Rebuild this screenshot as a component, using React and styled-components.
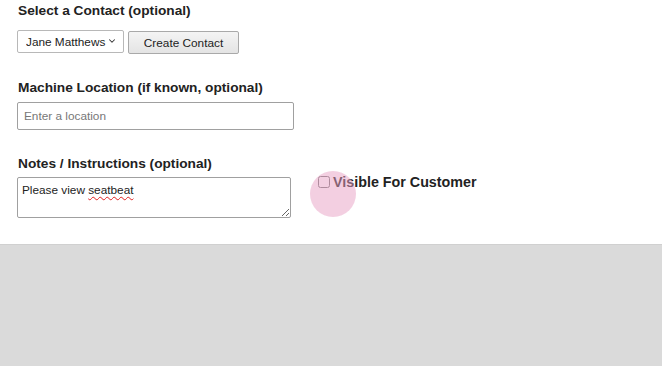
import React from "react"
import styled, { createGlobalStyle } from "styled-components"
import { ChevronDown } from "lucide-react"

const GlobalStyle = createGlobalStyle`
  html, body {
    margin: 0;
    padding: 0;
    background: #dadada;
    font-family: "Liberation Sans", Arial, sans-serif;
  }
`

const Panel = styled.div`
  background: #ffffff;
  height: 245px;
  border-bottom: 1px solid #d0d0d0;
  padding: 3px 0 0 17px;
  box-sizing: border-box;
`

const Field = styled.div`
  margin-top: ${(p) => p.top || "0"};
  margin-bottom: 26px;
`

const Label = styled.div`
  font-size: 13.7px;
  font-weight: bold;
  color: #222;
  line-height: 16px;
  margin: 0 0 ${(p) => p.spacing || "10px"} 1px;
`

const Row = styled.div`
  display: flex;
  align-items: ${(p) => p.align || "center"};
  gap: ${(p) => p.gap || "4px"};
`

const SelectWrap = styled.div`
  position: relative;
  width: 107px;
  height: 23px;
  svg {
    position: absolute;
    right: 7px;
    top: 6px;
    pointer-events: none;
    color: #333;
  }
`

const Select = styled.select`
  appearance: none;
  font-family: inherit;
  font-size: 11.8px;
  height: 23px;
  width: 100%;
  border: 1px solid #b8b8b8;
  border-radius: 2px;
  background: #fff;
  color: #222;
  padding: 0 0 0 8px;
  outline: none;
`

const Button = styled.button`
  font-family: inherit;
  font-size: 11.8px;
  height: 23px;
  width: 111px;
  margin-top: 2px;
  border: 1px solid #a9a9a9;
  border-radius: 2px;
  background: linear-gradient(#f4f4f4, #e4e4e4);
  color: #222;
`

const TextInput = styled.input`
  font-family: inherit;
  font-size: 11.8px;
  width: 277px;
  height: 28px;
  box-sizing: border-box;
  border: 1px solid #a0a0a0;
  border-radius: 2px;
  padding: 0 6px;
  color: #222;
  &::placeholder {
    color: #777;
  }
`

const NotesWrap = styled.div`
  position: relative;
  width: 274px;
  height: 41px;
`

const NotesArea = styled.textarea`
  display: block;
  font-family: inherit;
  font-size: 11.8px;
  line-height: 14px;
  width: 100%;
  height: 100%;
  box-sizing: border-box;
  border: 1px solid #a0a0a0;
  border-radius: 2px;
  padding: 5px 4px 4px;
  margin: 0;
  color: #222;
  resize: both;
`

const SpellMark = styled.div`
  position: absolute;
  left: 5px;
  top: 6px;
  font-size: 11.8px;
  line-height: 14px;
  color: transparent;
  pointer-events: none;
  white-space: pre;
  span {
    text-decoration: underline wavy #e02020;
    text-decoration-thickness: 1px;
    text-underline-offset: 2px;
  }
`

const CheckLabel = styled.label`
  position: relative;
  display: flex;
  align-items: center;
  gap: 3px;
  margin-top: -3px;
  font-size: 14.3px;
  font-weight: bold;
  color: #222;
`

const Box = styled.input`
  margin: 0;
  width: 12px;
  height: 12px;
`

const ClickRing = styled.span`
  position: absolute;
  left: -8px;
  top: -3px;
  width: 46px;
  height: 46px;
  border-radius: 50%;
  background: rgba(232, 160, 196, 0.5);
  pointer-events: none;
`

export default function App() {
  return (
    <>
      <GlobalStyle />
      <Panel>
        <Field>
          <Label>Select a Contact (optional)</Label>
          <Row>
            <SelectWrap>
              <Select defaultValue="jane">
                <option value="jane">Jane Matthews</option>
              </Select>
              <ChevronDown size={10} strokeWidth={2.5} />
            </SelectWrap>
            <Button>Create Contact</Button>
          </Row>
        </Field>
        <Field>
          <Label spacing="6px">Machine Location (if known, optional)</Label>
          <TextInput placeholder="Enter a location" />
        </Field>
        <Field top="1px">
          <Label spacing="5px">Notes / Instructions (optional)</Label>
          <Row align="flex-start" gap="27px">
            <NotesWrap>
              <NotesArea defaultValue="Please view seatbeat" spellCheck={false} />
              <SpellMark>
                Please view <span>seatbeat</span>
              </SpellMark>
            </NotesWrap>
            <CheckLabel>
              <ClickRing />
              <Box type="checkbox" />
              Visible For Customer
            </CheckLabel>
          </Row>
        </Field>
      </Panel>
    </>
  )
}
